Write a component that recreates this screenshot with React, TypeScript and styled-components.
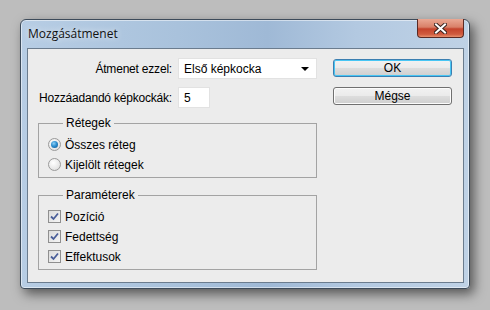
import React from 'react';
import styled, { createGlobalStyle } from 'styled-components';

const GlobalStyle = createGlobalStyle`
  body {
    margin: 0;
    background: #bdbdbd;
    font-family: 'Liberation Sans', Arial, sans-serif;
  }
`;

const Page = styled.div`
  width: 490px;
  height: 310px;
  padding: 19px 0 0 20px;
  box-sizing: border-box;
`;

const Window = styled.div`
  width: 450px;
  height: 270px;
  box-sizing: border-box;
  border: 1px solid #3d4b5a;
  border-radius: 6px 6px 4px 4px;
  padding: 0 5px 5px 6px;
  display: flex;
  flex-direction: column;
  background: linear-gradient(90deg, #b7cde4 0%, #a9c2dc 35%, #9fb9d6 55%, #b3c9e1 75%, #bfd2e6 100%);
  box-shadow: 4px 5px 12px rgba(0, 0, 0, 0.55), inset 0 0 0 1px rgba(255, 255, 255, 0.5);
`;

const TitleBar = styled.div`
  height: 28px;
  display: flex;
  justify-content: space-between;
  align-items: flex-start;
`;

const Title = styled.div`
  font-family: 'Open Sans', 'Noto Sans', sans-serif;
  font-size: 12px;
  color: #111;
  padding: 5px 0 0 1px;
  text-shadow: 0 0 6px rgba(255, 255, 255, 0.9);
`;

const CloseButton = styled.div`
  width: 47px;
  height: 19px;
  margin-top: -1px;
  box-sizing: border-box;
  border: 1px solid #5a2a24;
  border-top: none;
  border-radius: 0 0 4px 4px;
  background: linear-gradient(180deg, #eaa894 0%, #d98068 45%, #c4432c 55%, #d05c40 85%, #e8906e 100%);
  display: flex;
  align-items: center;
  justify-content: center;
`;

const Client = styled.div`
  flex: 1;
  box-sizing: border-box;
  border: 1px solid #6b7c8e;
  background: #ececec;
  padding: 9px 11px 0 10px;
  display: flex;
  justify-content: space-between;
  font-size: 12px;
  color: #000;
`;

const LeftColumn = styled.div`
  width: 279px;
  display: flex;
  flex-direction: column;
`;

const FormGrid = styled.div`
  display: grid;
  grid-template-columns: 134px auto;
  column-gap: 6px;
  row-gap: 8px;
  align-items: center;
  margin-bottom: 8px;
`;

const Label = styled.div`
  text-align: right;
  white-space: nowrap;
  letter-spacing: -0.2px;
`;

const Select = styled.div`
  width: 139px;
  height: 21px;
  box-sizing: border-box;
  background: #fff;
  border: 1px solid #e2e2e2;
  display: flex;
  align-items: center;
  justify-content: space-between;
  padding: 0 7px 0 5px;
`;

const Arrow = styled.div`
  width: 0;
  height: 0;
  border-left: 4px solid transparent;
  border-right: 4px solid transparent;
  border-top: 4px solid #000;
`;

const NumberInput = styled.div`
  width: 32px;
  height: 21px;
  box-sizing: border-box;
  background: #fff;
  border: 1px solid #e2e2e2;
  display: flex;
  align-items: center;
  padding-left: 5px;
`;

const Group = styled.fieldset<{ $height: number; $gap?: number; $rowGap: number }>`
  margin: 0 0 ${p => p.$gap ?? 0}px 0;
  height: ${p => p.$height}px;
  box-sizing: border-box;
  border: 1px solid #a3a3a3;
  padding: 8px 0 0 9px;
  display: flex;
  flex-direction: column;
  gap: ${p => p.$rowGap}px;
`;

const Legend = styled.legend`
  padding: 0 3px;
  margin-left: 15px;
  line-height: 14px;
`;

const Option = styled.div`
  display: flex;
  align-items: center;
  gap: 4px;
  height: 13px;
`;

const Radio = styled.div<{ $checked?: boolean }>`
  width: 13px;
  height: 13px;
  box-sizing: border-box;
  border-radius: 50%;
  border: 1px solid #9a9a9a;
  background: radial-gradient(circle at 40% 35%, #ffffff 0%, #e4e4e4 70%, #d0d0d0 100%);
  display: flex;
  align-items: center;
  justify-content: center;

  &::after {
    content: '';
    display: ${p => (p.$checked ? 'block' : 'none')};
    width: 7px;
    height: 7px;
    border-radius: 50%;
    background: radial-gradient(circle at 40% 35%, #8fd0f5 0%, #2d8fd0 45%, #0d4f8a 100%);
  }
`;

const Checkbox = styled.div`
  width: 13px;
  height: 13px;
  box-sizing: border-box;
  border: 1px solid #8f8f8f;
  background: linear-gradient(135deg, #dcdcdc 0%, #f4f4f4 100%);
  display: flex;
  align-items: center;
  justify-content: center;
`;

const ButtonColumn = styled.div`
  display: flex;
  flex-direction: column;
  gap: 10px;
  padding-top: 1px;
`;

const Button = styled.div<{ $default?: boolean }>`
  width: 119px;
  height: 18px;
  box-sizing: border-box;
  border: 1px solid ${p => (p.$default ? '#3c7fb1' : '#707070')};
  border-radius: 3px;
  background: linear-gradient(180deg, #f2f2f2 0%, #ebebeb 48%, #dddddd 52%, #cfcfcf 100%);
  box-shadow: inset 0 0 0 1px ${p => (p.$default ? '#48c6f4' : '#fcfcfc')};
  display: flex;
  align-items: center;
  justify-content: center;
  font-size: 12px;
`;

const Check = () => (
  <svg width="9" height="9" viewBox="0 0 9 9">
    <path d="M1 4.5 L3.5 7 L8 1.5" fill="none" stroke="#4a5e99" strokeWidth="1.8" />
  </svg>
);

const CloseGlyph = () => (
  <svg width="13" height="11" viewBox="0 0 13 11">
    <path d="M2 1.5 L11 9.5 M11 1.5 L2 9.5" stroke="#3b2420" strokeWidth="4" strokeLinecap="square" />
    <path d="M2 1.5 L11 9.5 M11 1.5 L2 9.5" stroke="#ffffff" strokeWidth="2" strokeLinecap="square" />
  </svg>
);

const App = () => {
  return (
    <Page>
      <GlobalStyle />
      <Window>
        <TitleBar>
          <Title>Mozgásátmenet</Title>
          <CloseButton>
            <CloseGlyph />
          </CloseButton>
        </TitleBar>
        <Client>
          <LeftColumn>
            <FormGrid>
              <Label>Átmenet ezzel:</Label>
              <Select>
                <span>Első képkocka</span>
                <Arrow />
              </Select>
              <Label>Hozzáadandó képkockák:</Label>
              <NumberInput>5</NumberInput>
            </FormGrid>
            <Group $height={62} $gap={10} $rowGap={7}>
              <Legend>Rétegek</Legend>
              <Option>
                <Radio $checked />
                <span>Összes réteg</span>
              </Option>
              <Option>
                <Radio />
                <span>Kijelölt rétegek</span>
              </Option>
            </Group>
            <Group $height={82} $rowGap={7}>
              <Legend>Paraméterek</Legend>
              <Option>
                <Checkbox><Check /></Checkbox>
                <span>Pozíció</span>
              </Option>
              <Option>
                <Checkbox><Check /></Checkbox>
                <span>Fedettség</span>
              </Option>
              <Option>
                <Checkbox><Check /></Checkbox>
                <span>Effektusok</span>
              </Option>
            </Group>
          </LeftColumn>
          <ButtonColumn>
            <Button $default>OK</Button>
            <Button>Mégse</Button>
          </ButtonColumn>
        </Client>
      </Window>
    </Page>
  );
};

export default App;
